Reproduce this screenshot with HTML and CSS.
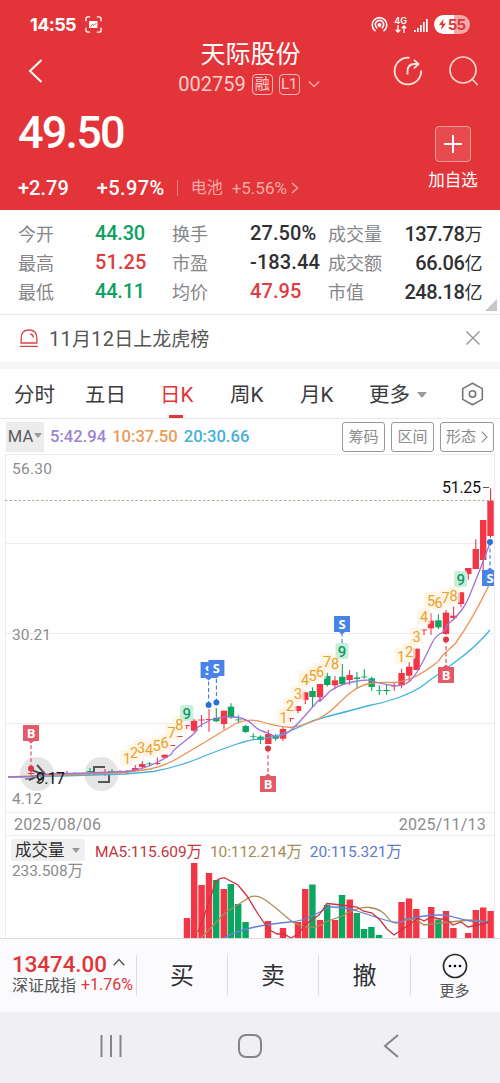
FILE: index.html
```
<!DOCTYPE html>
<html lang="zh-CN">
<head>
    <meta charset="UTF-8">
    <meta name="viewport" content="width=device-width, initial-scale=1.0">
    <title>天际股份 002759</title>
    <link rel="stylesheet" href="styles.css">
</head>
<body>
    <div class="phone">
        <header class="top">
            <div class="statusbar">
                <span class="clock">14:55</span>
                <svg class="shot-icon" width="17" height="17" viewBox="0 0 18 18" fill="none" stroke="#fff" stroke-width="1.4" stroke-linecap="round">
                    <path d="M1 5V3q0-2 2-2h2M13 1h2q2 0 2 2v2M17 13v2q0 2-2 2h-2M5 17H3q-2 0-2-2v-2"/>
                    <path d="M5 6h7.5v6H5z" fill="#fff"/>
                    <path d="M6 11l2-2 1.5 1 2-2" stroke="#e33539" stroke-width="1"/>
                </svg>
                <div class="status-right">
                    <svg width="17" height="17" viewBox="0 0 17 17" fill="none" stroke="#fff" stroke-width="1.6" stroke-linecap="round">
                        <path d="M4 14.7A7.3 7.3 0 1 1 13 14.7"/>
                        <path d="M5.8 11.8A4.2 4.2 0 1 1 11.2 11.8"/>
                        <circle cx="8.5" cy="9" r="1.2" fill="#fff"/>
                    </svg>
                    <div class="net">
                        <span>4G</span>
                        <svg width="12" height="8" viewBox="0 0 12 8" fill="none" stroke="#fff" stroke-width="1.3">
                            <path d="M3 0v7M.7 4.7L3 7l2.3-2.3M9 8V1M6.7 3.3L9 1l2.3 2.3"/>
                        </svg>
                    </div>
                    <svg class="signal" width="14" height="14" viewBox="0 0 14 14" fill="#fff">
                        <path d="M0 12h1.7v2H0zM3 10h1.7v4H3zM6 7h1.7v7H6zM9 4h1.7v10H9zM12 1h1.7v13H12z"/>
                    </svg>
                    <div class="battery">
                        <svg width="7" height="11" viewBox="0 0 7 11" fill="#e33539"><path d="M4.5 0L0 6h3l-1 5 5-6.5H4z"/></svg>
                        <span>55</span>
                    </div>
                </div>
            </div>

            <nav class="navbar">
                <svg class="back" width="16" height="26" viewBox="0 0 16 26" fill="none" stroke="#fff" stroke-width="2">
                    <path d="M13.5 2L2 13l11.5 11"/>
                </svg>
                <div class="title">
                    <h1>天际股份</h1>
                    <div class="code">
                        <span>002759</span><i class="tag">融</i><i class="tag">L1</i>
                        <svg width="12" height="8" viewBox="0 0 12 8" fill="none" stroke="#f5b3b0" stroke-width="1.2"><path d="M.8 1.5L6 6.5l5.2-5"/></svg>
                    </div>
                </div>
                <div class="nav-icons">
                    <svg width="30" height="30" viewBox="0 0 30 30" fill="none" stroke="#fce4e0" stroke-width="1.8">
                        <path d="M16.5 1.8A13.3 13.3 0 1 0 28.2 14.5"/>
                        <path d="M14.5 18.5v-3q0-7.5 7-7.5h4M21 3.8L25.5 8 21 12.3"/>
                    </svg>
                    <svg width="30" height="30" viewBox="0 0 30 30" fill="none" stroke="#fbd3cf" stroke-width="1.7">
                        <circle cx="14" cy="14" r="13"/>
                        <path d="M23.3 23.3L28.5 29"/>
                    </svg>
                </div>
            </nav>

            <section class="quote">
                <div>
                    <div class="price">49.50</div>
                    <div class="change">
                        <b>+2.79</b><b class="pct">+5.97%</b>
                        <span class="sector">电池</span><span class="sector-pct">+5.56%</span>
                        <svg width="8" height="12" viewBox="0 0 8 12" fill="none" stroke="#f5a9a7" stroke-width="1.4"><path d="M1 1l5.5 5L1 11"/></svg>
                    </div>
                </div>
                <div class="add">
                    <div class="add-box">
                        <svg width="18" height="18" viewBox="0 0 18 18" stroke="#fff" stroke-width="2"><path d="M9 0v18M0 9h18"/></svg>
                    </div>
                    <span>加自选</span>
                </div>
            </section>
        </header>

        <section class="stats">
            <span>今开</span><b class="down">44.30</b><span>换手</span><b>27.50%</b><span>成交量</span><b class="end">137.78<i>万</i></b>
            <span>最高</span><b class="up">51.25</b><span>市盈</span><b>-183.44</b><span>成交额</span><b class="end">66.06<i>亿</i></b>
            <span>最低</span><b class="down">44.11</b><span>均价</span><b class="up">47.95</b><span>市值</span><b class="end">248.18<i>亿</i></b>
        </section>

        <section class="notice">
            <svg width="18" height="18" viewBox="0 0 18 18" fill="none" stroke="#dc4348" stroke-width="1.3">
                <path d="M1.2 14V9Q1.2 1 9 1t7.8 8v5zM0 17.3h18M10.3 5q3 .7 3.2 3.5"/>
            </svg>
            <span><em>11</em>月<em>12</em>日上龙虎榜</span>
            <svg class="close" width="14" height="14" viewBox="0 0 14 14" stroke="#919191" stroke-width="1.3"><path d="M.5.5l13 13M13.5.5l-13 13"/></svg>
        </section>

        <nav class="tabs">
            <span>分时</span>
            <span>五日</span>
            <span class="active">日K</span>
            <span>周K</span>
            <span>月K</span>
            <span class="more">更多<i class="caret"></i></span>
            <svg width="23" height="24" viewBox="0 0 23 24" fill="none" stroke="#777" stroke-width="1.6" stroke-linejoin="round">
                <path d="M11.5 1.2L21.3 6.6v10.8l-9.8 5.4-9.8-5.4V6.6z"/>
                <circle cx="11.5" cy="12" r="3.2"/>
            </svg>
        </nav>

        <section class="indicator">
            <div class="ma-btn">MA<i class="caret small"></i></div>
            <span class="ma5">5:42.94</span>
            <span class="ma10">10:37.50</span>
            <span class="ma20">20:30.66</span>
            <div class="tools">
                <span>筹码</span><span>区间</span>
                <span class="shape">形态<svg width="7" height="12" viewBox="0 0 7 12" fill="none" stroke="#8b8b8b" stroke-width="1.1"><path d="M.7.7L6 6 .7 11.3"/></svg></span>
            </div>
        </section>

        <svg class="kline" width="500" height="359" viewBox="0 454 500 359">
            <g class="grid">
                <path d="M5 454.5H494M5 543.5H494M5 633.5H494M5 723.5H494M5 812.5H494M5.5 454V813M494.5 454V813"/>
            </g>
            <path class="price-line" d="M5 500.5H494"/>
            <text class="axis" x="12" y="474" textLength="40">56.30</text>
            <text class="axis" x="12" y="640" textLength="39">30.21</text>
            <text class="axis" x="12" y="804" textLength="30">4.12</text>
            <g class="float">
                <circle cx="37" cy="774" r="17"/>
                <circle cx="101.5" cy="774" r="17"/>
                <path d="M29 769l13 5-13 6M37 765l8 9-8 9"/>
                <path d="M94 775v-8h11M98 782h11v-11"/>
            </g>
            <g id="candles"></g>
            <path class="line20" d="M8 777L60 776 125 774 153 771.5Q167 769 180 765T207 755Q222 749 237 744T260 739Q276 737 290 731T313 720.7Q325 717 337 714T367 706Q384 703 400 697T425 684 440 673 455 662Q475 648 490 630"/>
            <path class="line10" d="M8 777L60 775 125 772.5 150 769Q165 766 180 757T200 745 220 733 237 723Q250 718 262 722T290 727.5Q302 726 314 721T337 705 353 691Q361 685 370 683.5T395 682.5Q410 681 425 671T440 659 455 644Q473 619 490 583"/>
            <path class="line5" d="M8 777L30 776.5 50 774 90 773 125 771.5Q143 770 158 762T172 753 185 741 197 729 210 720Q222 716 234 717T252 724 262 731 275 736.5Q283 737 290 731T310 710 320 700 330 691Q340 684 355 681.5T372 681Q382 684 392 685.5T410 681Q415 676 420 667T430 647 440 634 447 625Q455 619 461 611T471 592Q480 570 490 543"/>
            <g id="counts"></g>
            <g id="marks"></g>
            <text class="peak" x="442" y="492.5" textLength="39">51.25</text>
            <path d="M483 487.5h6" stroke="#555"/>
            <text class="peak" x="36" y="784" textLength="29">9.17</text>
            <path d="M25 779h8" stroke="#444"/>
        </svg>

        <div class="dates"><span>2025/08/06</span><span>2025/11/13</span></div>

        <div class="vol-head">
            <div class="vol-btn">成交量<i class="caret small"></i></div>
            <span class="v5">MA5:115.609万</span>
            <span class="v10">10:112.214万</span>
            <span class="v20">20:115.321万</span>
        </div>
        <svg class="volume" width="500" height="75" viewBox="0 863 500 75">
            <path class="side" d="M5.5 863V938M494.5 863V938"/>
            <text class="axis" x="12" y="875.5" textLength="71">233.508万</text>
            <g id="bars"></g>
            <path class="vol10" d="M201 938L225 913 250 897Q256 895 262 898T290 920Q297 926 308 927T325 922L342 916Q358 906 370 907.5T388 918 405 920L415 919 424 925 440 923 470 920 490 922"/>
            <path class="vol20" d="M223 938Q240 930 255 927T290 922Q302 921 312 916T330 907Q345 907 357 911T385 920 405 919L424 916Q443 914 450 916T470 921L490 922"/>
            <path class="vol5" d="M198 932L207 908 216 881Q221 877 225 878L238 885 247 896 258 914Q263 922 270 930L277 934 284 934 291 938 298 934 306 924 319 915 327 903.5 342 905 357 907 363 911 372 913 380 920 387 929 394 935 401 930 409 925 418 918 424 921 431 917 440 919 446 919 453 925 461 922 468 927 482 924 490 922"/>
        </svg>

        <footer class="actions">
            <div class="index">
                <div class="index-top"><b>13474.00</b>
                    <svg width="12" height="8" viewBox="0 0 12 8" fill="none" stroke="#555" stroke-width="1.3"><path d="M.7 7.3L6 1.5l5.3 5.8"/></svg>
                </div>
                <div class="index-sub"><span>深证成指</span><b>+1.76%</b></div>
            </div>
            <div class="act">买</div>
            <div class="act">卖</div>
            <div class="act">撤</div>
            <div class="act-more">
                <svg width="26" height="26" viewBox="0 0 26 26">
                    <circle cx="13" cy="13" r="11.5" fill="none" stroke="#2b2b2b" stroke-width="1.7"/>
                    <circle cx="8" cy="13" r="1.3"/><circle cx="13" cy="13" r="1.3"/><circle cx="18" cy="13" r="1.3"/>
                </svg>
                <span>更多</span>
            </div>
        </footer>

        <div class="sysnav">
            <svg width="22" height="22" viewBox="0 0 22 22" stroke="#858588" stroke-width="2"><path d="M1.5 0v22M11 0v22M20.5 0v22"/></svg>
            <svg width="24" height="24" viewBox="0 0 24 24" fill="none" stroke="#858588" stroke-width="2"><rect x="1" y="1" width="22" height="22" rx="7"/></svg>
            <svg width="16" height="24" viewBox="0 0 16 24" fill="none" stroke="#858588" stroke-width="2"><path d="M15 1L2 12l13 11"/></svg>
        </div>
    </div>

    <script>
        const RED = '#f23645';
        const GREEN = '#0ba660';

        // x, high, body top, body bottom, low, direction
        const candles = [
            [31, 769, 773, 774, 777, 1], [67, 771, 773, 774, 776, 1], [75, 772, 773, 774, 775, 0],
            [90, 768, 771, 772, 774, 0], [105, 769, 772, 773, 776, 1], [112, 769, 771, 772, 774, 0],
            [120, 770, 771, 772, 773, 1], [127, 770, 771, 772, 774, 1],
            [135.3, 765, 768, 770, 771, 1], [142.3, 761, 764, 767, 768, 1], [149.5, 762, 763.5, 764.3, 766, 0],
            [157.3, 757.5, 763, 764, 765, 1], [164.7, 754.7, 754.7, 757.7, 759, 1], [172, 745, 745, 746, 746, 1],
            [179.4, 736, 736, 737, 737, 1], [186.7, 725, 725, 726, 729, 1], [194, 719, 720.7, 730.7, 732.5, 1],
            [201.5, 715, 719.5, 720.5, 727, 1], [209, 709, 719, 720, 731.7, 1], [216.3, 708, 717.7, 721.3, 722, 0],
            [224, 710.7, 710.7, 724, 729.7, 1], [231, 703.3, 706.7, 717.5, 718.7, 0], [238.4, 715.3, 719.5, 720.3, 723.3, 0],
            [245.7, 724.7, 726, 732, 733, 0], [253.3, 733.3, 736, 736.7, 740, 0], [260.5, 735.3, 736.7, 740, 744, 0],
            [268.3, 730, 734, 744, 744, 1], [275.7, 734, 736.7, 738.7, 740.7, 0], [283, 727, 729, 738.7, 741, 1],
            [290.6, 718, 718, 719, 721.7, 1], [298, 706, 706, 711, 713, 1], [305.3, 692.3, 692.3, 700, 704, 1],
            [312.5, 687.3, 691, 697, 706.7, 0], [320, 684, 684, 697.3, 701.7, 1], [327.3, 672.7, 676, 685, 686.5, 0],
            [335, 676, 680.3, 685.3, 689.3, 1], [342.3, 664, 676.7, 684, 685, 0], [349.6, 670, 675, 680, 685, 1],
            [357, 672, 677.5, 679, 688, 0], [364.3, 669.3, 676.5, 677.3, 678.7, 0], [371.7, 676.7, 678.3, 687, 690.7, 0],
            [379.3, 685.3, 690, 690.7, 694.7, 0], [386.6, 685, 690, 691, 694.7, 0], [394.2, 682, 686.5, 687, 690.7, 1],
            [401.6, 668.7, 673, 685.3, 688.3, 1], [409.2, 662.3, 666.7, 675.7, 681.7, 1], [416.6, 648.7, 648.7, 670, 670, 1],
            [424, 629.5, 629.5, 630.5, 635.3, 1], [431, 613.3, 620.7, 628.3, 634.7, 1], [438.4, 614.3, 620.3, 627.3, 629.3, 0],
            [446, 610, 612.7, 634, 634.7, 1], [453.6, 606.7, 615.7, 618, 619, 1], [461, 592.3, 592.3, 604, 607.3, 1],
            [468.3, 568, 568, 574, 579.7, 1], [475.8, 539.3, 549, 569, 569, 1], [483.2, 520, 520, 560, 571.7, 1],
            [490.5, 488.3, 501, 536, 538, 1]
        ];

        // x, top of bar, direction
        const bars = [
            [187, 918, 1], [194.2, 863, 1], [201.6, 885, 1], [209, 873, 1], [216.2, 880, 0], [223.8, 889, 1],
            [230.8, 884, 0], [238.2, 904, 0], [245.6, 922, 0], [268, 921, 1], [283, 928, 1], [298, 922, 1],
            [305.2, 889, 1], [312.4, 884.5, 0], [320, 920, 1], [327.2, 905, 0], [335, 920, 1], [342, 895, 0],
            [349.8, 899.5, 1], [356.8, 913, 0], [364, 929, 0], [371.4, 927, 0], [379, 935, 0], [401.5, 902, 1],
            [409, 898.5, 1], [416.3, 909, 1], [431.2, 907, 1], [438.4, 919.5, 0], [446, 911, 1], [453.4, 928, 1],
            [468.2, 933, 1], [475.8, 910, 1], [483.2, 907.5, 1], [490.6, 911, 1]
        ];

        // digit, center x, center y
        const counts = [
            [1, 127, 758], [2, 134, 752.5], [3, 141, 747.5], [4, 149, 749.5], [5, 156.5, 745.5], [6, 164.5, 742.5],
            [7, 171.5, 732], [8, 179.3, 724], [9, 186.7, 713],
            [1, 283.5, 717], [2, 290, 705.5], [3, 298, 693.5], [4, 305, 679], [5, 312.5, 675], [6, 320, 671],
            [7, 327, 661], [8, 335, 663.5], [9, 342, 651],
            [1, 401, 656], [2, 409, 651], [3, 416.6, 636], [4, 424, 616.5], [5, 431, 600], [6, 438.5, 602],
            [7, 445.5, 597], [8, 453.5, 595], [9, 460.7, 579]
        ];

        // letter, x, box top, dot y
        const marks = [
            ['B', 31, 725, 768.5], ['S', 208.6, 662, 705], ['S', 216.4, 660, 702.5], ['B', 268, 776, 748.5],
            ['S', 342, 616, 0], ['B', 446, 667, 639.5], ['S', 490, 570, 542]
        ];

        document.getElementById('candles').innerHTML = candles.map(([x, hi, top, bottom, lo, up]) => {
            const c = up ? RED : GREEN;
            return `<path d="M${x} ${hi}V${lo}" stroke="${c}" stroke-width="1.1"/>` +
                `<rect x="${x - 3.2}" y="${top}" width="6.4" height="${bottom - top}" fill="${c}"/>`;
        }).join('');

        document.getElementById('bars').innerHTML = bars.map(([x, top, up]) =>
            `<rect x="${x - 3.2}" y="${top}" width="6.4" height="${938 - top}" fill="${up ? RED : GREEN}"/>`
        ).join('');

        document.getElementById('counts').innerHTML = counts.map(([n, x, y]) =>
            `<rect class="${n === 9 ? 'nine-bg' : 'count-bg'}" x="${x - 6.5}" y="${y - 8}" width="13" height="16" rx="2"/>`
        ).join('') + counts.map(([n, x, y]) =>
            `<text class="${n === 9 ? 'nine' : 'count'}" x="${x}" y="${y + 5.5}">${n}</text>`
        ).join('');

        document.getElementById('marks').innerHTML = marks.map(([t, x, y, dot]) => {
            const color = t === 'B' ? '#e35b67' : '#4a83e8';
            const dotColor = t === 'B' ? '#dc3545' : '#2574dc';
            const above = !dot || dot > y;
            const edge = above ? y + 16 : y;
            const tip = above ? `M${x - 3} ${edge}l3 2.5 3-2.5z` : `M${x - 3} ${edge}l3-2.5 3 2.5z`;
            const width = x > 480 ? 12 : 16;
            let s = `<path d="M${x} ${dot || 643}V${edge}" stroke="${dotColor}" stroke-dasharray="4 2.5"/>`;
            if (dot) s += `<circle cx="${x}" cy="${dot}" r="3" fill="${dotColor}"/>`;
            return s + `<rect x="${x - 8}" y="${y}" width="${width}" height="16" fill="${color}"/>` +
                `<path d="${tip}" fill="${color}"/><text class="mark" x="${x}" y="${y + 13}">${t}</text>`;
        }).join('');
    </script>
</body>
</html>
```
FILE: styles.css
```
* {
    box-sizing: border-box;
}
body {
    margin: 0;
    font-family: Roboto, "Noto Sans CJK SC", sans-serif;
    background-color: #fff;
    color: #303033;
}
i, em {
    font-style: normal;
}
b {
    font-weight: 500;
}
svg {
    display: block;
    flex: none;
}
.phone {
    width: 500px;
    height: 1083px;
    overflow: hidden;
    display: flex;
    flex-direction: column;
    background: #fefefe;
}
.phone > * {
    flex: none;
}

/* red header */
.top {
    height: 210px;
    background: #e33539;
    color: #fff;
}
.statusbar {
    height: 40px;
    padding: 9px 30px 0;
    display: flex;
    align-items: center;
}
.clock {
    font: 700 18px Inter, sans-serif;
    letter-spacing: -0.6px;
}
.shot-icon {
    margin-left: 9px;
}
.status-right {
    margin-left: auto;
    display: flex;
    align-items: center;
}
.net {
    margin: 0 7px 0 6px;
    display: flex;
    flex-direction: column;
    align-items: center;
    font: 600 9px/9px Inter, sans-serif;
}
.signal {
    margin-right: 6px;
}
.battery {
    width: 36px;
    height: 19px;
    border-radius: 10px;
    background: linear-gradient(to right, #fff 55%, #f4a9a9 55%);
    display: flex;
    align-items: center;
    justify-content: center;
    gap: 2px;
    color: #d93a3d;
    font: 700 15px Inter, sans-serif;
    letter-spacing: -0.8px;
}
.navbar {
    height: 56px;
    padding: 0 21px 0 28px;
    display: grid;
    grid-template-columns: 106px 1fr 112px;
    align-items: center;
}
.back {
    margin-top: 3px;
}
.title {
    display: flex;
    flex-direction: column;
    align-items: center;
    white-space: nowrap;
}
h1 {
    margin: 0;
    font-size: 25px;
    line-height: 30px;
    font-weight: 400;
}
.code {
    height: 28px;
    display: flex;
    align-items: center;
    font-size: 20px;
    color: #f9cfcb;
}
.code span {
    margin-left: -3px;
}
.tag {
    width: 21px;
    height: 21px;
    margin-left: 6px;
    border: 1px solid #f6bbb8;
    border-radius: 4px;
    font-size: 15px;
    line-height: 18px;
    text-align: center;
}
.code svg {
    margin-left: 8px;
}
.nav-icons {
    display: flex;
    justify-content: flex-end;
    gap: 26px;
    padding-top: 3px;
}
.quote {
    display: flex;
    justify-content: space-between;
    padding: 0 22px 0 18px;
}
.price {
    height: 72px;
    line-height: 74px;
    font-size: 45px;
    font-weight: 500;
    letter-spacing: -1.8px;
}
.change {
    height: 40px;
    display: flex;
    align-items: center;
    font-size: 20px;
}
.pct {
    margin-left: 28px;
    letter-spacing: 0.4px;
}
.sector {
    margin-left: 12px;
    padding-left: 13px;
    border-left: 1px solid #eb7c7c;
    line-height: 16px;
    font-size: 16px;
    color: #f4a9a7;
}
.sector-pct {
    margin: 0 4px 0 9px;
    font-size: 17px;
    color: #f4a9a7;
}
.add {
    width: 50px;
    padding-top: 30px;
    display: flex;
    flex-direction: column;
    align-items: center;
    font-size: 16.5px;
    white-space: nowrap;
}
.add-box {
    width: 36px;
    height: 36px;
    margin-bottom: 5px;
    border: 1px solid #f19b9a;
    border-radius: 4px;
    background: #e74b4e;
    display: flex;
    align-items: center;
    justify-content: center;
}

/* quote numbers */
.stats {
    position: relative;
    height: 105px;
    padding: 8px 18px 0;
    border-bottom: 1px solid #e8e8e8;
    display: grid;
    grid-template-columns: 77px 77px 78px 78px 60px 1fr;
    grid-auto-rows: 29px;
    align-items: center;
    white-space: nowrap;
}
.stats::after {
    content: "";
    position: absolute;
    right: 3px;
    bottom: 3px;
    border: 6px solid #c6c6c8;
    border-top-color: transparent;
    border-left-color: transparent;
}
.stats span {
    font-size: 18px;
    color: #868688;
}
.stats b {
    font-size: 20px;
    letter-spacing: 0.1px;
}
.stats b i {
    font-size: 18px;
    font-weight: 400;
}
.stats .end {
    letter-spacing: -0.4px;
    text-align: right;
}
.stats .up {
    color: #de3c41;
}
.stats .down {
    letter-spacing: -0.2px;
    color: #0f9f5e;
}
.notice {
    height: 54px;
    padding: 0 20px 1px;
    border-bottom: 7px solid #f6f6f7;
    display: flex;
    align-items: center;
    font-size: 19px;
    color: #555;
}
.notice span {
    margin: -1px 0 0 11px;
}
.notice em {
    font-size: 20px;
    letter-spacing: 0.3px;
}
.close {
    margin-left: auto;
}
.tabs {
    height: 50px;
    padding: 0 17px 0 14px;
    border-bottom: 1px solid #e9e9e9;
    display: grid;
    grid-template-columns: 71px 75px 70px 70px 69px 92px 23px;
    align-items: center;
    font-size: 20.5px;
    line-height: 52px;
    color: #3b3b3d;
    white-space: nowrap;
}
.tabs span {
    height: 49px;
}
.tabs .active {
    width: 34px;
    color: #e33539;
    background: linear-gradient(#e33539, #e33539) no-repeat 9px 100% / 14px 3px;
}
.caret {
    display: inline-block;
    margin-left: 7px;
    border: 5px solid transparent;
    border-top: 6px solid #999;
    border-bottom: 0;
    vertical-align: 4px;
}
.caret.small {
    margin-left: 1px;
    border-width: 5px 4px 0;
}

/* chart */
.indicator {
    height: 35px;
    padding: 0 6px;
    display: flex;
    align-items: center;
    font-size: 17px;
}
.indicator > span {
    margin: -1px 0 0 6px;
    font-size: 16.6px;
    font-weight: 500;
}
.ma-btn {
    width: 38px;
    height: 30px;
    line-height: 30px;
    background: #ececec;
    color: #5a5a5a;
    text-align: center;
    white-space: nowrap;
    font-size: 16.5px;
}
.ma5 {
    color: #9b83d4;
}
.ma10 {
    color: #eb9a57;
}
.ma20 {
    color: #45b0d6;
}
.tools {
    margin-left: auto;
    display: flex;
    gap: 6px;
}
.tools span {
    width: 43px;
    height: 30px;
    border: 1px solid #999;
    border-radius: 3px;
    font-size: 15px;
    line-height: 28px;
    text-align: center;
    color: #8b8b8b;
}
.tools .shape {
    width: 54px;
    display: flex;
    align-items: center;
    justify-content: center;
    gap: 5px;
}
.grid path, .side {
    fill: none;
    stroke: #ededf0;
}
.price-line {
    stroke: #b8a894;
    stroke-dasharray: 2.5 2;
}
.axis {
    font-size: 15.5px;
    fill: #8c8c8e;
}
.peak {
    font-size: 16px;
    fill: #111;
}
.line5, .line10, .line20, .vol5, .vol10, .vol20 {
    fill: none;
    stroke-width: 1.3;
}
.line5 {
    stroke: #a272d6;
}
.line10 {
    stroke: #ec8f50;
}
.line20 {
    stroke: #43b3d9;
}
.vol5 {
    stroke: #cf3340;
}
.vol10 {
    stroke: #a88c55;
}
.vol20 {
    stroke: #6581d6;
}
.float circle {
    fill: #dedee0;
    opacity: 0.8;
}
.float path {
    fill: none;
    stroke: #555;
    stroke-width: 2;
}
.count-bg {
    fill: #fdf3df;
    opacity: 0.75;
}
.nine-bg {
    fill: #c9eedc;
}
.count, .nine {
    font-size: 15px;
    text-anchor: middle;
    fill: #e8a02c;
}
.count {
    font-size: 14.5px;
}
.nine {
    fill: #119c5d;
    font-weight: 500;
}
.mark {
    font: 700 13px "Open Sans", sans-serif;
    fill: #fff;
    text-anchor: middle;
}
.dates {
    height: 23px;
    margin: 0 5px;
    padding: 0 8px;
    border: 1px solid #ededf0;
    border-top: 0;
    display: flex;
    justify-content: space-between;
    align-items: center;
    font-size: 16px;
    color: #8c8c8e;
    letter-spacing: 0.2px;
}
.vol-head {
    height: 27px;
    margin: 0 5px;
    padding-left: 5px;
    border: 1px solid #ededf0;
    border-width: 0 1px;
    display: flex;
    align-items: center;
    font-size: 15.5px;
    white-space: nowrap;
}
.vol-btn {
    width: 74px;
    height: 22px;
    margin-right: 2px;
    line-height: 23px;
    padding-left: 4px;
    border-radius: 3px;
    background: #efeff0;
    font-size: 16.5px;
}
.vol-btn .caret {
    margin-left: 7px;
    vertical-align: 3px;
}
.vol-head span {
    margin-left: 8px;
    letter-spacing: -0.1px;
}
.v5 {
    color: #c4353d;
}
.v10 {
    color: #a58b56;
}
.v20 {
    color: #5d79c9;
}

/* bottom bar */
.actions {
    height: 74px;
    border-top: 1px solid #dcdcde;
    background: #fbfafc;
    display: grid;
    grid-template-columns: 137px 91px 91px 92px 1fr;
    align-items: center;
}
.index {
    height: 41px;
    padding-left: 12px;
    border-right: 1px solid #dedee0;
    white-space: nowrap;
}
.index-top {
    display: flex;
    align-items: center;
    gap: 6px;
    height: 17px;
    font-size: 22.3px;
    color: #e03438;
}
.index-top svg {
    margin-top: -3px;
}
.index-sub {
    display: flex;
    align-items: center;
    height: 24px;
    font-size: 16px;
    color: #555;
}
.index-sub b {
    margin-left: 5px;
    font-weight: 400;
    color: #e03438;
}
.act {
    height: 41px;
    line-height: 42px;
    border-right: 1px solid #dedee0;
    text-align: center;
    font-size: 24px;
}
.act-more {
    padding: 4px 2px 0 0;
    display: flex;
    flex-direction: column;
    align-items: center;
    font-size: 15px;
    line-height: 22px;
    color: #555;
}
.act-more svg {
    margin-bottom: 1px;
}
.sysnav {
    height: 71px;
    padding: 0 101px 4px 100px;
    background: #f0eff1;
    display: grid;
    grid-template-columns: 138px 1fr 16px;
    align-items: center;
}
```
